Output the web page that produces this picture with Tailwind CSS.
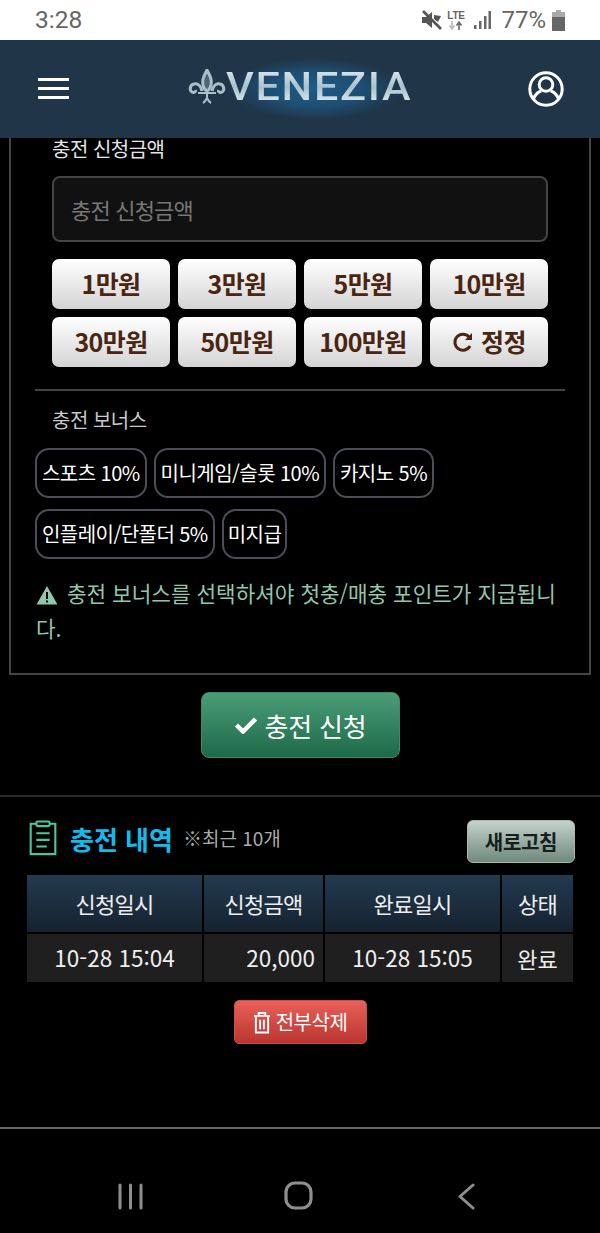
<!DOCTYPE html>
<html lang="ko">
<head>
    <meta charset="UTF-8">
    <meta name="viewport" content="width=device-width, initial-scale=1.0">
    <title>충전 신청 - VENEZIA</title>
    <script src="https://cdn.jsdelivr.net/npm/@tailwindcss/browser@4"></script>
</head>
<body class="bg-black font-['Noto_Sans_CJK_KR','Noto_Sans',sans-serif]">
<div class="w-[600px] h-[1233px] flex flex-col overflow-hidden bg-black">

    <!-- status bar -->
    <div class="h-10 bg-white flex items-center justify-between pl-[35px] pr-[35px] text-[#666] font-['Roboto',sans-serif]">
        <span class="text-[24.500px] leading-none">3:28</span>
        <div class="flex items-center">
            <svg class="w-[20px] h-[20px]" viewBox="0 0 20 20" fill="#555"><path d="M0 7h4l6-5v16l-6-5H0z"/><path d="M1 1l18 18" stroke="#555" stroke-width="2.600"/><path d="M12 5l7 1-3 6-4-3z"/></svg>
            <div class="ml-[5px] w-[17px] flex flex-col items-center">
                <span class="text-[10px] leading-[11px] font-bold font-['Liberation_Sans',sans-serif] tracking-[-0.3px]">LTE</span>
                <svg class="w-[16px] h-[9px]" viewBox="0 0 16 9"><path d="M4 0v6M1.500 4.500L4 8l2.500-3.500" stroke="#bbb" stroke-width="1.600" fill="none"/><path d="M11 9V3M8.500 4.500L11 1l2.500 3.500" stroke="#666" stroke-width="1.600" fill="none"/></svg>
            </div>
            <svg class="ml-[10px] w-[17px] h-[20px]" viewBox="0 0 17 20" fill="#666"><rect x="0" y="15" width="2.500" height="4"/><rect x="5" y="11" width="2.500" height="8"/><rect x="10" y="6" width="2.500" height="13"/><rect x="14.500" y="1" width="2.500" height="18"/></svg>
            <span class="ml-[10px] text-[24px] leading-none">77%</span>
            <svg class="ml-[6px] w-[13px] h-[21px]" viewBox="0 0 13 21" fill="#666"><rect x="4" y="0" width="5" height="3" fill="#aaa"/><rect x="0" y="2" width="13" height="5" fill="#aaa"/><rect x="0" y="7" width="13" height="14"/></svg>
        </div>
    </div>

    <!-- header -->
    <header class="h-[98px] bg-[#203548] flex items-center justify-between pl-[38px] pr-[36px] relative z-10">
        <div class="w-[31px] flex flex-col gap-[6px] -mt-[1px]">
            <div class="h-[3px] bg-white"></div>
            <div class="h-[3px] bg-white"></div>
            <div class="h-[3px] bg-white"></div>
        </div>
        <div class="relative flex items-center -mt-[4px] ml-[3px]">
            <div class="absolute left-[42px] top-[-10px] w-[170px] h-[62px] bg-[radial-gradient(closest-side,#1c5f8ee6_0%,#1d5a86b3_55%,#20354800_100%)] rounded-full"></div>
            <svg class="relative w-[38px] h-[36px]" viewBox="0 0 38 36" fill="none" stroke="#a9c0cb" stroke-width="3">
                <path d="M19 1c-3 6-5 9-4 15 .6 3 2 5 4 6 2-1 3.400-3 4-6 1-6-1-9-4-15z" fill="#a9c0cb" fill-opacity=".35"/>
                <path d="M14 22c-1-5-4-8-8-7-4 .8-5 6-2 8 2 1.200 4-.3 3.500-2"/>
                <path d="M24 22c1-5 4-8 8-7 4 .8 5 6 2 8-2 1.200-4-.3-3.500-2"/>
                <path d="M10 24h18M19 22v8M15 34c2-1 3-3 4-5 1 2 2 4 4 5" stroke-width="2"/>
            </svg>
            <span class="relative mr-[22px] origin-left scale-x-[1.135] text-[38px] leading-none tracking-[1.500px] font-medium font-['Roboto',sans-serif] text-transparent bg-clip-text bg-linear-to-b from-[#dfe9ee] via-[#a8c2cf] to-[#e6eff3]">VENEZIA</span>
        </div>
        <svg class="w-[36px] h-[36px]" viewBox="0 0 36 36" fill="none" stroke="#fff" stroke-width="3">
            <circle cx="18" cy="18" r="16.200"/>
            <circle cx="18" cy="13.500" r="6.800"/>
            <path d="M5.500 28c2-5.500 6-7.800 8-8M30.500 28c-2-5.500-6-7.800-8-8"/>
        </svg>
    </header>

    <main class="flex-1 flex flex-col">
        <!-- charge form -->
        <section class="mx-[9px] h-[537px] border-x-2 border-b-2 border-[#444] px-[24px]">
            <label class="block pl-[17px] pt-[1px] text-[20px] tracking-[-0.5px] leading-[20px] text-[#e5e5e5]">충전 신청금액</label>
            <div class="mx-[17px] mt-[17px] h-[66px] rounded-[8px] border-2 border-[#444] bg-[#111] flex items-center pl-[17px] text-[22px] tracking-[-0.8px] text-[#777]">충전 신청금액</div>

            <div class="mx-[17px] mt-[17px] grid grid-cols-4 gap-x-2 gap-y-2 text-[25px] tracking-[-0.6px] font-bold text-[#4a2511]">
                <button class="h-[50px] rounded-[7px] bg-linear-to-b from-white to-[#d4d4d4]">1만원</button>
                <button class="h-[50px] rounded-[7px] bg-linear-to-b from-white to-[#d4d4d4]">3만원</button>
                <button class="h-[50px] rounded-[7px] bg-linear-to-b from-white to-[#d4d4d4]">5만원</button>
                <button class="h-[50px] rounded-[7px] bg-linear-to-b from-white to-[#d4d4d4]">10만원</button>
                <button class="h-[50px] rounded-[7px] bg-linear-to-b from-white to-[#d4d4d4]">30만원</button>
                <button class="h-[50px] rounded-[7px] bg-linear-to-b from-white to-[#d4d4d4]">50만원</button>
                <button class="h-[50px] rounded-[7px] bg-linear-to-b from-white to-[#d4d4d4]">100만원</button>
                <button class="h-[50px] rounded-[7px] bg-linear-to-b from-white to-[#d4d4d4] flex items-center justify-center gap-[7px]">
                    <svg class="w-[22px] h-[22px]" viewBox="0 0 22 22" fill="none" stroke="#4a2511" stroke-width="3"><path d="M18 15a8 8 0 1 1-1-9"/><path d="M20 2v7h-7" fill="#4a2511" stroke="none"/></svg>
                    <span>정정</span>
                </button>
            </div>

            <div class="mt-[22px] h-[2px] bg-[#444]"></div>

            <div class="pl-[17px] mt-[18px] text-[20px] tracking-[-0.5px] leading-[22px] text-[#c8c8c8]">충전 보너스</div>

            <div class="mt-[17px] flex flex-wrap gap-x-[7px] gap-y-[11px] text-[20px] tracking-[-0.55px] text-white">
                <button class="h-[50px] px-[5px] rounded-[14px] border-2 border-[#4a4f57]">스포츠 10%</button>
                <button class="h-[50px] px-[5px] rounded-[14px] border-2 border-[#4a4f57]">미니게임/슬롯 10%</button>
                <button class="h-[50px] px-[5px] rounded-[14px] border-2 border-[#4a4f57]">카지노 5%</button>
                <button class="h-[50px] px-[5px] rounded-[14px] border-2 border-[#4a4f57]">인플레이/단폴더 5%</button>
                <button class="h-[50px] px-[4px] rounded-[14px] border-2 border-[#4a4f57]">미지급</button>
            </div>

            <p class="mt-[16px] pl-[1px] text-[21.300px] leading-[35px] text-[#8fc7ad]">
                <svg class="inline w-[22px] h-[20px] -mt-[3px] mr-[3px]" viewBox="0 0 22 20"><path d="M11 1L21.500 19.500H.5z" fill="#8fc7ad"/><path d="M10 7h2v7h-2zM10 15.500h2v2h-2z" fill="#000"/></svg>
                충전 보너스를 선택하셔야 첫충/매충 포인트가 지급됩니다.
            </p>
        </section>

        <div class="mt-[17px] flex justify-center">
            <button class="w-[199px] h-[66px] rounded-[8px] border border-[#3d8a66] bg-linear-to-b from-[#4b9d78] to-[#1c6a49] flex items-center justify-center gap-[7px] text-[26px] tracking-[-0.2px] text-white">
                <svg class="w-[24px] h-[18px]" viewBox="0 0 23 18" fill="none" stroke="#fff" stroke-width="4.500"><path d="M2 9l6.500 6.500L21 3"/></svg>
                <span>충전 신청</span>
            </button>
        </div>

        <div class="mt-[37px] h-[2px] bg-[#2a2a2a]"></div>

        <!-- history -->
        <section class="px-[27px]">
            <div class="mt-[23px] flex items-start justify-between">
                <div class="flex items-center h-[36px]">
                    <svg class="w-[32px] h-[36px]" viewBox="0 0 32 38" fill="none" stroke="#4dc79a" stroke-width="2.200"><path d="M9 4H3v32h26V4h-6"/><rect x="9" y="1.500" width="14" height="5" rx="1.500"/><path d="M9 14h14M9 21h14M9 28h11"/></svg>
                    <span class="ml-[11px] text-[26px] font-bold text-[#10bcee]">충전 내역</span>
                    <span class="ml-[10px] text-[19px] text-[#aaa]">※최근 10개</span>
                </div>
                <button class="-mr-[2px] w-[108px] h-[43px] rounded-[6px] bg-linear-to-b from-[#c4d2cb] to-[#6f8a7e] text-[20px] tracking-[-0.3px] font-bold text-[#15201c] border border-[#a8b8b0]">새로고침</button>
            </div>

            <table class="mt-[12px] w-[546px] table-fixed border-collapse text-center text-[22px] text-[#eee]">
                <thead>
                    <tr class="h-[58px] bg-linear-to-b from-[#233a50] to-[#15222f]">
                        <th class="w-[176px] font-normal tracking-[-0.7px] border-r-2 border-black">신청일시</th>
                        <th class="w-[121px] font-normal tracking-[-0.7px] border-r-2 border-black">신청금액</th>
                        <th class="w-[177px] font-normal tracking-[-0.7px] border-r-2 border-black">완료일시</th>
                        <th class="w-[72px] font-normal tracking-[-0.7px]">상태</th>
                    </tr>
                </thead>
                <tbody>
                    <tr class="h-[49px] bg-[#1f1f1f] border-t-2 border-black text-[22.500px]">
                        <td class="border-r-2 border-black">10-28 15:04</td>
                        <td class="border-r-2 border-black text-right pr-[8px]">20,000</td>
                        <td class="border-r-2 border-black">10-28 15:05</td>
                        <td class="text-[22px]">완료</td>
                    </tr>
                </tbody>
            </table>

            <div class="mt-[18px] flex justify-center">
                <button class="w-[133px] h-[44px] rounded-[5px] border border-[#c9504a] bg-linear-to-b from-[#ea5f59] to-[#b93630] flex items-center justify-center gap-[5px] text-[20px] tracking-[-0.5px] text-white">
                    <svg class="w-[18px] h-[23px]" viewBox="0 0 19 24" fill="none" stroke="#fff" stroke-width="2"><path d="M1 5h17M6 5V2h7v3M3 5v17.500h13V5M7.500 9v10M11.500 9v10"/></svg>
                    <span>전부삭제</span>
                </button>
            </div>
        </section>
    </main>

    <!-- android nav -->
    <nav class="h-[106px] border-t-2 border-[#666] relative">
        <svg class="absolute left-[118px] top-[54px] w-[25px] h-[27px]" viewBox="0 0 25 27" stroke="#8f8f8f" stroke-width="3" stroke-linecap="round"><path d="M2 2v23M12.500 2v23M23 2v23"/></svg>
        <svg class="absolute left-[284px] top-[52px] w-[29px] h-[29px]" viewBox="0 0 29 29" fill="none" stroke="#8f8f8f" stroke-width="3.200"><rect x="2" y="2" width="25" height="25" rx="9"/></svg>
        <svg class="absolute left-[458px] top-[54px] w-[17px] h-[27px]" viewBox="0 0 17 27" fill="none" stroke="#8f8f8f" stroke-width="3" stroke-linecap="round" stroke-linejoin="round"><path d="M15 2L2 13.500 15 25"/></svg>
    </nav>
</div>
</body>
</html>
